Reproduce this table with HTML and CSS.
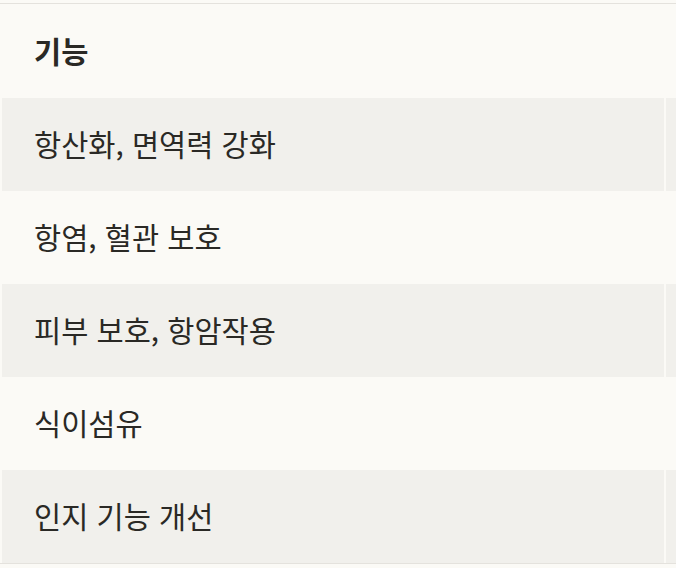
FILE: index.html
```html
<!DOCTYPE html>
<html lang="ko">
<head>
<meta charset="utf-8">
<link rel="stylesheet" href="styles.css">
</head>
<body>
<div class="wrap">
  <table class="tbl">
    <thead>
      <tr><th class="c1">기능</th><th class="c2"></th></tr>
    </thead>
    <tbody>
      <tr class="odd"><td class="c1">항산화, 면역력 강화</td><td class="c2"></td></tr>
      <tr><td class="c1">항염, 혈관 보호</td><td class="c2"></td></tr>
      <tr class="odd"><td class="c1">피부 보호, 항암작용</td><td class="c2"></td></tr>
      <tr><td class="c1">식이섬유</td><td class="c2"></td></tr>
      <tr class="odd"><td class="c1">인지 기능 개선</td><td class="c2"></td></tr>
    </tbody>
  </table>
</div>
</body>
</html>
```
FILE: styles.css
```css
html, body {
  margin: 0;
  padding: 0;
  background: #fbfaf6;
  overflow: hidden;
}
.wrap {
  margin-top: 3px;
  border-top: 1px solid #e4e2dd;
  border-bottom: 1px solid #e4e2dd;
  width: 1100px;
}
.tbl {
  border-collapse: separate;
  border-spacing: 2px 0;
  table-layout: fixed;
  width: 1000px;
  font-family: "Noto Sans CJK KR", "Noto Sans", sans-serif;
  color: #2a2925;
}
.tbl th, .tbl td {
  padding: 0 32px 3px;
  text-align: left;
  vertical-align: middle;
  font-size: 29.5px;
  white-space: nowrap;
}
.tbl th {
  height: 91px;
  font-weight: 700;
}
.tbl td {
  height: 90px;
  font-weight: 400;
}
.c1 {
  width: 598px;
}
.odd td {
  background: #f1f0ec;
}
```
